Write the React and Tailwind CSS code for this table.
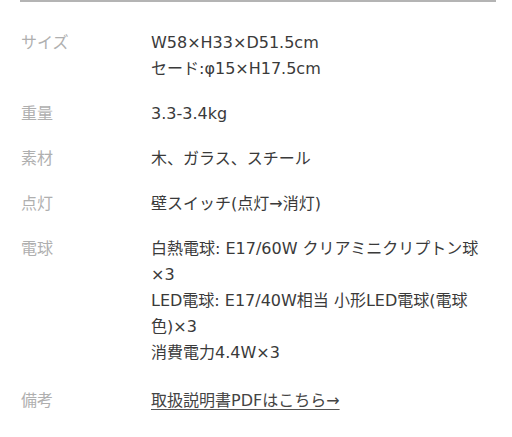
import React from "react";

const rows = [
  { label: "サイズ", lines: ["W58×H33×D51.5cm", "セード:φ15×H17.5cm"] },
  { label: "重量", lines: ["3.3-3.4kg"] },
  { label: "素材", lines: ["木、ガラス、スチール"] },
  { label: "点灯", lines: ["壁スイッチ(点灯→消灯)"] },
  {
    label: "電球",
    lines: [
      "白熱電球: E17/60W クリアミニクリプトン球",
      "×3",
      "LED電球: E17/40W相当 小形LED電球(電球",
      "色)×3",
      "消費電力4.4W×3",
    ],
  },
];

const App = () => {
  return (
    <div
      className="w-[512px] h-[437px] bg-white overflow-hidden"
      style={{ fontFamily: '"DejaVu Sans", "Noto Sans CJK JP", sans-serif' }}
    >
      <div className="mx-[20px] w-[476px] border-t-2 border-[#b4b4b4]" />
      <div className="pt-[19px] pl-[21px] pr-[10px]">
        {rows.map((row) => (
          <div key={row.label} className="flex pt-[9px] pb-[10px] text-[16px] leading-[26px]">
            <div className="w-[130px] shrink-0 text-[#afafaf]">{row.label}</div>
            <div className="flex-1 text-[#3a3a3a] whitespace-nowrap">
              {row.lines.map((line) => (
                <div key={line}>{line}</div>
              ))}
            </div>
          </div>
        ))}
        <div className="flex pt-[12px] pb-[10px] text-[16px] leading-[26px]">
          <div className="w-[130px] shrink-0 text-[#afafaf]">備考</div>
          <a href="#" className="text-[#444444] underline underline-offset-[3px] decoration-[#555555]">
            取扱説明書PDFはこちら→
          </a>
        </div>
      </div>
    </div>
  );
};

export default App;
